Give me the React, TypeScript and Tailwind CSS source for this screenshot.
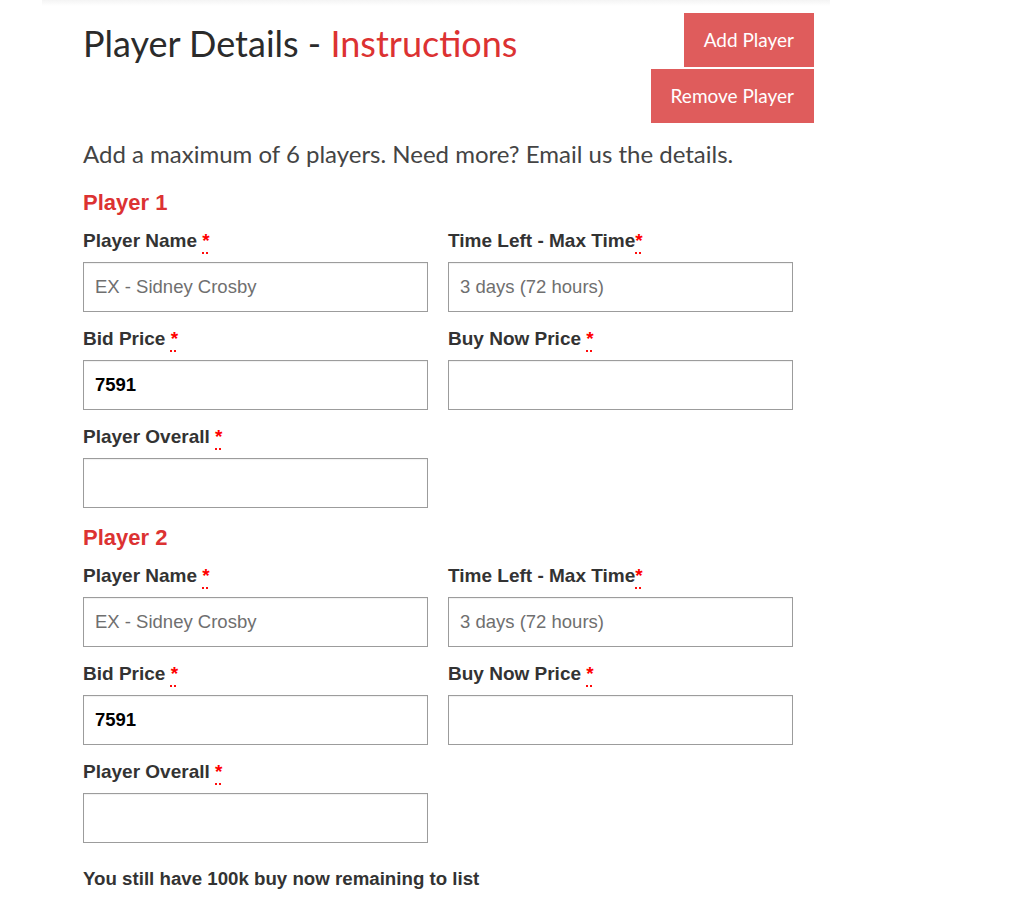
import React from 'react';

const lato = "font-['Lato','Liberation_Sans',sans-serif]";
const arial = "font-['Liberation_Sans','Arial',sans-serif]";

interface FieldProps {
  label: string;
  spaced?: boolean;
  placeholder?: string;
  value?: string;
}

function Field({ label, spaced = true, placeholder, value }: FieldProps) {
  return (
    <div className="flex flex-col">
      <label className={`${arial} text-[19px] leading-[22px] font-bold text-[#333] mb-[10px]`}>
        {label}
        {spaced ? ' ' : ''}
        <abbr title="required" className="text-[#ff0000] no-underline">
          <span className="underline decoration-dotted decoration-[#ff0000] underline-offset-[6px]">*</span>
        </abbr>
      </label>
      <input
        type="text"
        defaultValue={value}
        placeholder={placeholder}
        className={`${arial} h-[50px] w-full border border-[#9c9c9c] shadow-[inset_0_1px_1px_rgba(0,0,0,0.06)] bg-white pl-[11px] text-[18.5px] font-bold text-black placeholder:font-normal placeholder:text-[#6f6f6f] outline-none`}
      />
    </div>
  );
}

function PlayerBlock({ n }: { n: number }) {
  return (
    <div className="flex flex-col">
      <h3 className={`${arial} text-[22px] leading-[26px] font-bold text-[#dc3232] mb-[14px]`}>Player {n}</h3>
      <div className="grid grid-cols-[345px_345px] gap-x-[20px] gap-y-[16px]">
        <Field label="Player Name" placeholder="EX - Sidney Crosby" />
        <Field label="Time Left - Max Time" spaced={false} placeholder="3 days (72 hours)" />
        <Field label="Bid Price" value="7591" />
        <Field label="Buy Now Price" />
        <Field label="Player Overall" />
      </div>
    </div>
  );
}

export default function App() {
  return (
    <div className="min-h-[904px] bg-white">
      <div className="mx-[42px] w-[788px] h-[6px] bg-gradient-to-b from-[#f4f4f4] to-white" />
      <div className="pl-[83px] w-[814px] pt-[7px] pb-[16px]">
        {/* Header */}
        <div className="flex justify-between items-start">
          <h1 className={`${lato} text-[36px] leading-[60px] text-[#2b2b2b]`}>
            Player Details - <span className="text-[#dc3232]">Instructions</span>
          </h1>
          <div className="flex flex-col items-end gap-[2px]">
            <button className={`${lato} h-[54px] px-[20px] bg-[#df5c5c] text-white text-[19px]`}>Add Player</button>
            <button className={`${lato} h-[54px] px-[20px] bg-[#df5c5c] text-white text-[19px]`}>Remove Player</button>
          </div>
        </div>

        <p className={`${lato} mt-[16px] text-[24px] leading-[30px] text-[#444]`}>
          Add a maximum of 6 players. Need more? Email us the details.
        </p>

        <div className="mt-[21px] flex flex-col gap-[17px]">
          <PlayerBlock n={1} />
          <PlayerBlock n={2} />
        </div>

        <p className={`${arial} mt-[25px] text-[18.7px] leading-[22px] font-bold text-[#333]`}>
          You still have 100k buy now remaining to list
        </p>
      </div>
    </div>
  );
}
